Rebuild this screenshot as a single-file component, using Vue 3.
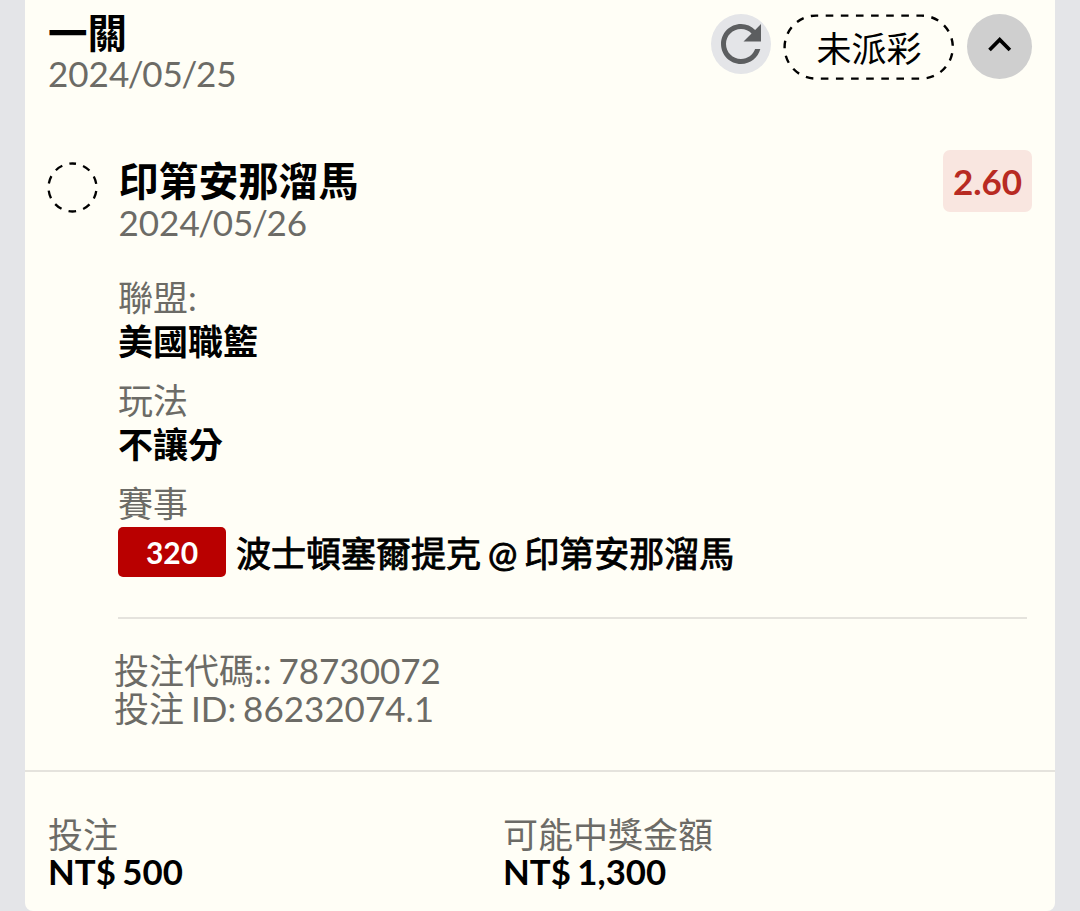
<script setup>
import { ref } from 'vue'

const expanded = ref(true)

const slip = {
  title: '一關',
  date: ['2024', '05', '25'],
  status: '未派彩'
}

const pick = {
  name: '印第安那溜馬',
  date: ['2024', '05', '26'],
  odds: '2.60',
  eventNo: '320',
  event: '波士頓塞爾提克 @ 印第安那溜馬'
}

const details = [
  { label: '聯盟:', value: '美國職籃' },
  { label: '玩法', value: '不讓分' }
]

const codes = ['投注代碼:: 78730072', '投注 ID: 86232074.1']

const totals = [
  { label: '投注', value: 'NT$ 500' },
  { label: '可能中獎金額', value: 'NT$ 1,300' }
]
</script>

<template>
  <main class="page">
    <article class="card">
      <header class="header">
        <div class="header-text">
          <h1 class="title">{{ slip.title }}</h1>
          <p class="date">{{ slip.date[0] }}<i>/</i>{{ slip.date[1] }}<i>/</i>{{ slip.date[2] }}</p>
        </div>
        <div class="actions">
          <button class="refresh" aria-label="refresh">
            <svg width="60" height="60" viewBox="0 0 24 24">
              <path d="M17.65 6.35C16.2 4.9 14.21 4 12 4c-4.42 0-7.99 3.58-7.99 8s3.57 8 7.99 8c3.73 0 6.84-2.55 7.73-6h-2.08c-.82 2.33-3.04 4-5.65 4-3.31 0-6-2.69-6-6s2.69-6 6-6c1.66 0 3.14.69 4.22 1.78L13 11h7V4z" fill="#5c5e60" />
            </svg>
          </button>
          <div class="status">
            <svg class="status-outline" width="171" height="66" viewBox="0 0 171 66">
              <rect x="1.6" y="1.6" width="168.2" height="63" rx="31.5" fill="none" stroke="#000" stroke-width="2.4" stroke-dasharray="7.6 7.52" stroke-dashoffset="-9.6" />
            </svg>
            <span>{{ slip.status }}</span>
          </div>
          <button class="toggle" aria-label="toggle" @click="expanded = !expanded">
            <svg width="65" height="65" viewBox="0 0 65 65">
              <path d="M22.5 36L32.7 25.7L42.9 36" fill="none" stroke="#000" stroke-width="3.7" />
            </svg>
          </button>
        </div>
      </header>

      <section v-show="expanded" class="pick">
        <svg class="pending" width="50" height="50" viewBox="0 0 50 50">
          <circle cx="25.5" cy="25.5" r="24" fill="none" stroke="#000" stroke-width="2.3" stroke-dasharray="7.8 7.28" stroke-dashoffset="4.2" transform="rotate(-90 25.5 25.5)" />
        </svg>
        <div class="pick-body">
          <div class="pick-head">
            <div>
              <h2 class="pick-name">{{ pick.name }}</h2>
              <p class="date">{{ pick.date[0] }}<i>/</i>{{ pick.date[1] }}<i>/</i>{{ pick.date[2] }}</p>
            </div>
            <span class="odds">{{ pick.odds }}</span>
          </div>

          <dl class="details">
            <div v-for="item in details" :key="item.label" class="detail">
              <dt>{{ item.label }}</dt>
              <dd>{{ item.value }}</dd>
            </div>
            <div class="detail">
              <dt>賽事</dt>
              <dd class="event">
                <span class="event-no">{{ pick.eventNo }}</span>
                <span class="event-name">{{ pick.event }}</span>
              </dd>
            </div>
          </dl>

          <div class="codes">
            <p v-for="code in codes" :key="code">{{ code }}</p>
          </div>
        </div>
      </section>

      <footer class="totals">
        <div v-for="item in totals" :key="item.label" class="total">
          <p class="total-label">{{ item.label }}</p>
          <p class="total-value">{{ item.value }}</p>
        </div>
      </footer>
    </article>
  </main>
</template>

<style>
body {
  background: #e4e5e8;
}
</style>

<style scoped>
.page {
  box-sizing: border-box;
  height: 911px;
  padding: 0 25px;
  background: #e4e5e8;
  font-family: Lato, 'Noto Sans CJK TC', sans-serif;
  font-size: 35px;
  word-spacing: -2px;
  color: #000;
  overflow: hidden;
}

.card {
  height: 911px;
  background: #fffef6;
  border-radius: 0 0 8px 8px;
}

h1,
h2,
p,
dl,
dt,
dd {
  margin: 0;
}

button {
  border: none;
  padding: 0;
  border-radius: 50%;
  cursor: pointer;
}

svg {
  display: block;
  overflow: visible;
}

/* Header */
.header {
  box-sizing: border-box;
  display: flex;
  justify-content: space-between;
  height: 150px;
  padding: 12px 23px 0 23px;
}

.title {
  font-size: 39.5px;
  line-height: 41px;
  font-weight: 700;
}

.date {
  line-height: 40px;
  color: #6c6b66;
}

/* tighten the slashes between date parts */
.date i {
  font-style: normal;
  margin: 0 -1.4px;
}

.actions {
  display: flex;
  align-items: flex-start;
  padding-top: 2px;
}

.refresh {
  width: 60px;
  height: 60px;
  margin-right: 12px;
  background: #e4e5e8;
}

.status {
  position: relative;
  width: 171px;
  height: 66px;
  margin-right: 13px;
  line-height: 69px;
  text-align: center;
  text-indent: 1px;
}

.status-outline {
  position: absolute;
  inset: 0;
}

.toggle {
  width: 65px;
  height: 65px;
  background: #cfcfcf;
}

/* Pick */
.pick {
  display: flex;
  gap: 21px;
  height: 620px;
  padding: 0 23px 0 22px;
}

.pending {
  flex-shrink: 0;
  margin-top: 12px;
}

.pick-body {
  flex: 1;
}

.pick-head {
  display: flex;
  justify-content: space-between;
  align-items: flex-start;
  height: 126px;
}

.pick-name {
  padding: 10px 0 0 0.5px;
  font-size: 40px;
  line-height: 42px;
  font-weight: 700;
}

.pick .date {
  padding-left: 0.5px;
}

.odds {
  width: 89px;
  height: 62px;
  line-height: 63px;
  border-radius: 7px;
  background: #f9e6e0;
  color: #b82a22;
  font-weight: 700;
  text-align: center;
}

.details {
  height: 341px;
  margin-right: 5px;
  border-bottom: 2px solid #e5e3dd;
}

.detail {
  height: 103px;
}

.detail dt {
  line-height: 43px;
  color: #6c6b66;
}

.detail dd {
  line-height: 44px;
  font-weight: 700;
}

.detail .event {
  display: flex;
  align-items: center;
  gap: 10px;
  padding-top: 2px;
  height: 50px;
  line-height: 50px;
  font-weight: 400;
}

.event-no {
  width: 108px;
  height: 50px;
  border-radius: 5px;
  background: #b90000;
  color: #fff;
  font-size: 30px;
  line-height: 51px;
  font-weight: 700;
  text-align: center;
}

.event-name {
  padding-top: 2px;
  -webkit-text-stroke: 0.9px currentColor;
}

.codes {
  margin-left: -4px;
  padding-top: 32px;
  line-height: 38px;
  color: #6c6b66;
}

/* Totals */
.totals {
  display: grid;
  grid-template-columns: 455px 1fr;
  border-top: 2px solid #e5e3dd;
  padding: 42px 23px 0;
}

.total-label {
  line-height: 40px;
  color: #6c6b66;
}

.total-value {
  font-size: 34.8px;
  line-height: 36px;
  font-weight: 700;
}
</style>
